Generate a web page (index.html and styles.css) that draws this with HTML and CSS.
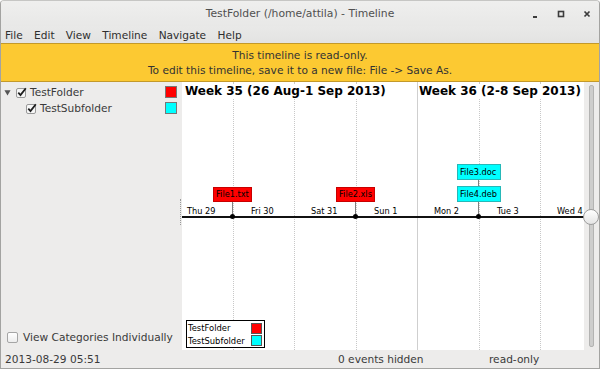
FILE: index.html
```html
<!DOCTYPE html>
<html lang="en">
<head>
    <meta charset="UTF-8">
    <title>TestFolder (/home/attila) - Timeline</title>
    <link rel="stylesheet" href="styles.css">
</head>
<body>

<div class="window">
    <!-- Заголовок окна -->
    <div class="titlebar">
        <span class="title">TestFolder (/home/attila) - Timeline</span>
        <div class="controls">
            <svg class="ctl" viewBox="0 0 8 8"><rect x="2" y="6" width="4" height="2" fill="#3c3c3c"/></svg>
            <svg class="ctl" viewBox="0 0 8 8"><rect x="1.5" y="1.5" width="5" height="5" fill="none" stroke="#3c3c3c" stroke-width="1.6"/></svg>
            <svg class="ctl" viewBox="0 0 8 8"><path d="M1.5 1.5l5 5M6.5 1.5l-5 5" stroke="#3c3c3c" stroke-width="1.7"/></svg>
        </div>
    </div>

    <div class="menubar">
        <span>File</span>
        <span>Edit</span>
        <span>View</span>
        <span>Timeline</span>
        <span>Navigate</span>
        <span>Help</span>
    </div>

    <div class="infobar">
        <p>This timeline is read-only.</p>
        <p>To edit this timeline, save it to a new file: File -&gt; Save As.</p>
    </div>

    <div class="main">
        <div class="sidebar">
            <ul class="tree">
                <li class="tree-row">
                    <svg class="expander" viewBox="0 0 8 8"><path d="M0.5 1.5h7l-3.5 6z" fill="#555"/></svg>
                    <svg class="check" viewBox="0 0 11 11"><rect x="0.5" y="1.5" width="9" height="9" rx="1.5" fill="#f6f6f6" stroke="#999"/><path d="M2.3 5.6l2.2 2.4L9.8 1.2" stroke="#1e1e1e" stroke-width="1.8" fill="none"/></svg>
                    <span class="name">TestFolder</span>
                    <span class="swatch red"></span>
                </li>
                <li class="tree-row child">
                    <svg class="check" viewBox="0 0 11 11"><rect x="0.5" y="1.5" width="9" height="9" rx="1.5" fill="#f6f6f6" stroke="#999"/><path d="M2.3 5.6l2.2 2.4L9.8 1.2" stroke="#1e1e1e" stroke-width="1.8" fill="none"/></svg>
                    <span class="name">TestSubfolder</span>
                    <span class="swatch cyan"></span>
                </li>
            </ul>
            <label class="individually">
                <span class="box"></span>
                View Categories Individually
            </label>
            <span class="grip"></span>
        </div>

        <!-- Полотно таймлайна -->
        <div class="canvas">
            <span class="week" style="left: 3px">Week 35 (26 Aug-1 Sep 2013)</span>
            <span class="week" style="left: 237px">Week 36 (2-8 Sep 2013)</span>

            <span class="vline" style="left: 51px"></span>
            <span class="vline" style="left: 112px"></span>
            <span class="vline" style="left: 174px"></span>
            <span class="vline week-line" style="left: 235px"></span>
            <span class="vline" style="left: 297px"></span>
            <span class="vline" style="left: 358px"></span>

            <span class="day" style="left: 5px">Thu 29</span>
            <span class="day" style="left: 69px">Fri 30</span>
            <span class="day" style="left: 129px">Sat 31</span>
            <span class="day" style="left: 192px">Sun 1</span>
            <span class="day" style="left: 252px">Mon 2</span>
            <span class="day" style="left: 315px">Tue 3</span>
            <span class="day" style="left: 375px">Wed 4</span>

            <span class="stem" style="left: 50px; top: 119px; height: 16px"></span>
            <span class="stem" style="left: 173px; top: 119px; height: 16px"></span>
            <span class="stem" style="left: 296px; top: 98px; height: 37px"></span>

            <span class="axis"></span>
            <span class="dot" style="left: 48px"></span>
            <span class="dot" style="left: 171px"></span>
            <span class="dot" style="left: 294px"></span>

            <span class="event red" style="left: 31px; top: 105px">File1.txt</span>
            <span class="event red" style="left: 154px; top: 105px">File2.xls</span>
            <span class="event cyan" style="left: 275px; top: 82px">File3.doc</span>
            <span class="event cyan" style="left: 275px; top: 104px">File4.deb</span>

            <div class="legend">
                <div class="legend-row"><span>TestFolder</span><span class="legend-swatch red"></span></div>
                <div class="legend-row"><span>TestSubfolder</span><span class="legend-swatch cyan"></span></div>
            </div>
        </div>

        <div class="slider">
            <span class="track"></span>
            <span class="thumb"></span>
        </div>
    </div>

    <div class="statusbar">
        <span class="status-time">2013-08-29 05:51</span>
        <span class="status-hidden">0 events hidden</span>
        <span class="status-mode">read-only</span>
    </div>
</div>

</body>
</html>
```

FILE: styles.css
```css
body {
    margin: 0;
    padding: 0;
    background-color: #ffffff;
    font-family: "DejaVu Sans", sans-serif;
    font-size: 10.6px;
    color: #2e3436;
}
p {
    margin: 0;
}
.window {
    width: 600px;
    height: 369px;
    box-sizing: border-box;
    border: 1px solid #a3a3a1;
    border-top-color: #c6c6c4;
    border-radius: 4px 4px 0 0;
    background-color: #edeceb;
    display: flex;
    flex-direction: column;
    overflow: hidden;
}
.titlebar {
    height: 25px;
    flex: none;
    position: relative;
    display: flex;
    align-items: center;
    justify-content: center;
    background: linear-gradient(#efefee, #e8e8e7);
}
.title {
    color: #505050;
    font-size: 10.8px;
}
.controls {
    position: absolute;
    right: 8px;
    top: 9px;
    display: flex;
    gap: 18px;
}
.ctl {
    width: 8px;
    height: 8px;
}
.menubar {
    height: 17px;
    flex: none;
    display: flex;
    align-items: center;
    padding-left: 4px;
    background: linear-gradient(#e9e9e8, #e3e3e2);
}
.menubar span {
    margin-right: 11.3px;
    color: #2e2e2e;
}
.infobar {
    height: 37px;
    flex: none;
    background-color: #fcc932;
    border: 1px solid #c3992a;
    margin: 0 -1px;
    display: flex;
    flex-direction: column;
    justify-content: center;
    align-items: center;
    line-height: 15px;
    color: #333;
}
.main {
    flex: 1;
    display: flex;
    min-height: 0;
}
.sidebar {
    width: 181px;
    flex: none;
    display: flex;
    flex-direction: column;
    position: relative;
}
.tree {
    list-style: none;
    margin: 0;
    padding: 2px 0 0 0;
}
.tree-row {
    height: 16px;
    display: flex;
    align-items: center;
    position: relative;
    padding-left: 3px;
}
.tree-row.child {
    padding-left: 25px;
}
.expander {
    width: 7px;
    height: 7px;
    margin-right: 5px;
}
.check {
    width: 11px;
    height: 11px;
    margin-right: 3px;
}
.name {
    color: #3a3a3a;
}
.swatch {
    position: absolute;
    left: 164px;
    top: 2px;
    width: 10px;
    height: 10px;
    border: 1px solid #777;
}
.red {
    background-color: #ff0000;
}
.cyan {
    background-color: #00ffff;
}
.individually {
    margin-top: auto;
    margin-bottom: 7px;
    padding-left: 6px;
    display: flex;
    align-items: center;
    gap: 5px;
    color: #3a3a3a;
}
.individually .box {
    width: 9px;
    height: 9px;
    border: 1px solid #a5a5a5;
    border-radius: 2px;
    background: linear-gradient(#ffffff, #ededed);
}
.grip {
    position: absolute;
    right: 1px;
    top: 117px;
    height: 26px;
    border-left: 1px dotted #9a9a9a;
}
.canvas {
    width: 402px;
    flex: none;
    position: relative;
    background-color: #ffffff;
    overflow: hidden;
}
.week {
    position: absolute;
    top: 2px;
    font-weight: bold;
    font-size: 12px;
    color: #000;
    white-space: nowrap;
    background-color: #fff;
    z-index: 2;
}
.vline {
    position: absolute;
    top: 0;
    bottom: 0;
    border-left: 1px dotted #c8c8c8;
}
.week-line {
    border-left: 1px solid #cfcfcf;
}
.day {
    position: absolute;
    top: 124px;
    font-size: 8.2px;
    color: #000;
    white-space: nowrap;
}
.axis {
    position: absolute;
    left: 0;
    right: 0;
    top: 134px;
    height: 1.5px;
    background-color: #111;
}
.dot {
    position: absolute;
    top: 132px;
    width: 5px;
    height: 5px;
    border-radius: 50%;
    background-color: #000;
}
.stem {
    position: absolute;
    width: 1px;
    background-color: #808080;
}
.event {
    position: absolute;
    height: 13px;
    line-height: 13px;
    padding: 0 2px;
    font-size: 8.2px;
    color: #000;
    white-space: nowrap;
}
.event.red {
    width: 33px;
    border: 1px solid #c80000;
}
.event.cyan {
    width: 38px;
    height: 14px;
    line-height: 14px;
    border: 1px solid #26b8b8;
}
.legend {
    position: absolute;
    left: 4px;
    top: 238px;
    width: 76px;
    border: 1px solid #000;
    background-color: #fff;
    padding: 1px 0 0 1px;
    font-size: 8.4px;
    color: #000;
}
.legend-row {
    display: flex;
    justify-content: space-between;
    align-items: center;
    height: 12.5px;
}
.legend-swatch {
    width: 9px;
    height: 9px;
    border: 1px solid #555;
    margin-right: 2px;
}
.slider {
    flex: 1;
    position: relative;
}
.track {
    position: absolute;
    left: 5px;
    top: 3px;
    bottom: 3px;
    width: 3px;
    background-color: #cdcdcc;
    border: 1px solid #b3b3b2;
    border-radius: 2px;
}
.thumb {
    position: absolute;
    left: -1px;
    top: 127px;
    width: 14px;
    height: 14px;
    border-radius: 50%;
    border: 1px solid #9d9d9d;
    background: linear-gradient(#ffffff, #e4e4e4);
}
.statusbar {
    height: 18px;
    flex: none;
    display: flex;
    align-items: center;
    color: #3a3a3a;
}
.status-time {
    width: 333px;
    padding-left: 4px;
}
.status-hidden {
    width: 151px;
}
```
